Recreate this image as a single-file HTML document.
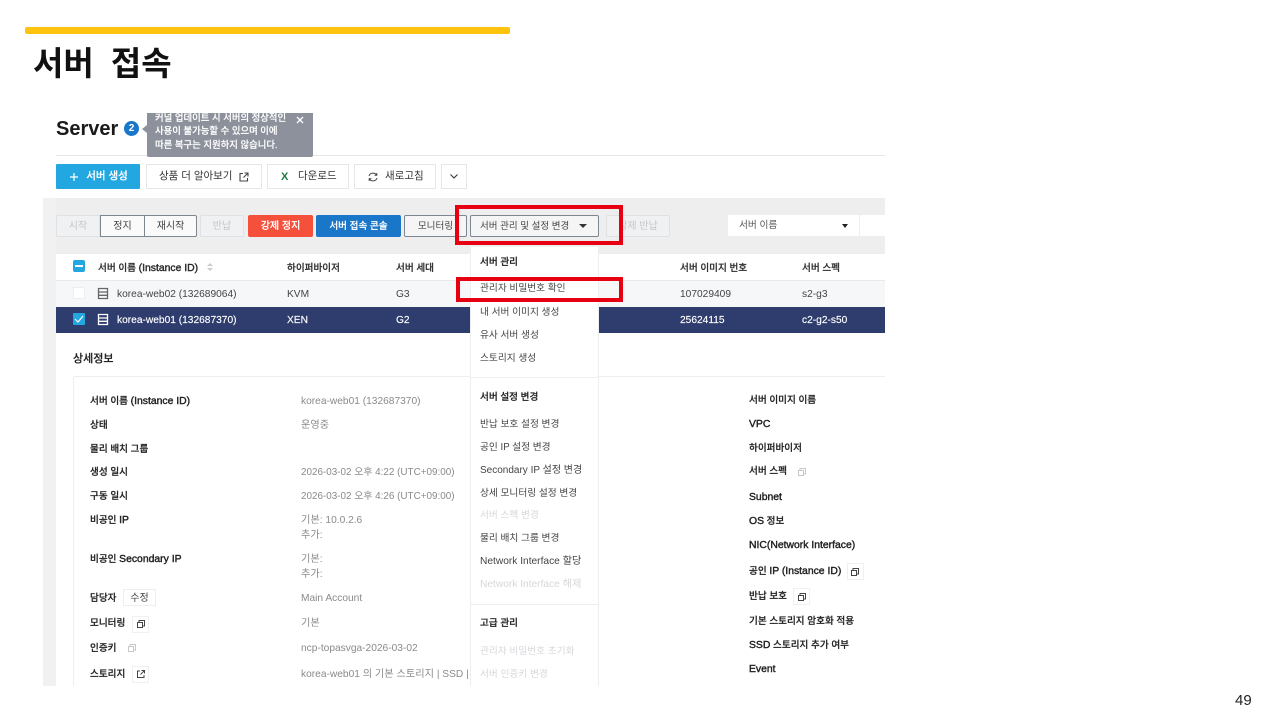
<!DOCTYPE html>
<html lang="ko"><head><meta charset="utf-8"><title>서버 접속</title>
<style>
html,body{margin:0;padding:0;background:#fff}
#p{position:relative;width:1280px;height:720px;overflow:hidden;background:#fff;font-family:"Liberation Sans","Noto Sans CJK KR",sans-serif}
#c{position:absolute;left:43px;top:113px;width:842px;height:573px;overflow:hidden;background:#fff;filter:blur(.35px)}
.a{position:absolute}
.t{position:absolute;white-space:nowrap;font-size:10.2px;line-height:14px;color:#444}
#c .t{margin-top:2px}
#c .t.n{margin-top:0}
.b{font-weight:500;color:#222;-webkit-text-stroke:.2px #222;font-size:9.6px}
.b i{font-style:normal;font-size:10.4px;-webkit-text-stroke:.4px #222}
.k{font-size:9.7px}
.g{color:#8a8a8a}
.d{color:#d5d7da}
.btn{position:absolute;box-sizing:border-box;text-align:center;font-size:10px;white-space:nowrap}
.m{font-weight:500;-webkit-text-stroke:.15px currentColor}
.r{position:absolute;box-sizing:border-box;border:4.5px solid #e60012}
svg{position:absolute;overflow:visible}
</style></head><body><div id="p">
<div class="a" style="left:25px;top:27px;width:485px;height:6.5px;background:#fdc30f;border-radius:2px"></div>
<div class="t" style="left:33px;top:44px;font-size:33px;line-height:40px;font-weight:700;color:#111;word-spacing:8px;filter:blur(.3px)">서버 접속</div>
<div class="t" style="left:1235px;top:694px;font-size:15px;color:#222">49</div>

<div id="c">
<!-- header white -->
<div class="t n" style="left:13px;top:3px;font-size:20px;line-height:26px;font-weight:700;color:#1a1a1a">Server</div>
<div class="a" style="left:81px;top:8px;width:15px;height:15px;border-radius:50%;background:#1a76c9;color:#fff;font-size:10px;line-height:15px;text-align:center;font-weight:700">2</div>
<div class="a" style="left:99px;top:12px;width:0;height:0;border:4px solid transparent;border-right:5px solid #8c919c;border-left:0"></div>
<div class="a" style="left:104px;top:0;width:166px;height:44px;background:#8c919c;border-radius:0 0 2px 2px"></div>
<div class="t m n" style="left:112px;top:-2px;color:#fff;font-size:9.4px">커널 업데이트 시 서버의 정상적인</div>
<div class="t m n" style="left:112px;top:11px;color:#fff;font-size:9.4px">사용이 불가능할 수 있으며 이에</div>
<div class="t m n" style="left:112px;top:25px;color:#fff;font-size:9.4px">따른 복구는 지원하지 않습니다.</div>
<svg style="left:253px;top:3px" width="8" height="8"><path d="M1 1L7 7M7 1L1 7" stroke="#fff" stroke-width="1.3"/></svg>
<div class="a" style="left:270px;top:42px;width:572px;height:1px;background:#e6e6e6"></div>
<div class="a" style="left:13px;top:42px;width:91px;height:1px;background:#e6e6e6"></div>

<div class="btn m" style="left:13px;top:51px;width:84px;height:25px;background:#22a7e0;color:#fff;line-height:25px;border-radius:1px;padding-left:18px;font-size:10.5px">서버 생성</div>
<svg style="left:26px;top:59px" width="10" height="10"><path d="M5 1V9M1 5H9" stroke="#fff" stroke-width="1.2"/></svg>
<div class="btn" style="left:103px;top:51px;width:116px;height:25px;background:#fff;border:1px solid #e4e6e8;color:#333;line-height:23px;font-size:10.5px;text-align:left;padding-left:12px">상품 더 알아보기</div>
<svg style="left:196px;top:59px" width="10" height="10" fill="none" stroke="#444" stroke-width="1.1"><path d="M4 1.5H1V9H8.5V6M5.5 1H9V4.5M9 1L4.5 5.5"/></svg>
<div class="btn" style="left:224px;top:51px;width:82px;height:25px;background:#fff;border:1px solid #e4e6e8;color:#333;line-height:23px;font-size:10.5px;padding-left:30px;text-align:left">다운로드</div>
<div class="t n" style="left:238px;top:57px;font-size:11px;font-weight:700;color:#1d7a45">X</div>
<div class="btn" style="left:311px;top:51px;width:82px;height:25px;background:#fff;border:1px solid #e4e6e8;color:#333;line-height:23px;font-size:10.5px;padding-left:30px;text-align:left">새로고침</div>
<svg style="left:325px;top:59px" width="10" height="10" fill="none" stroke="#444" stroke-width="1"><path d="M1 4A4.2 4.2 0 0 1 8.5 3M9 6A4.2 4.2 0 0 1 1.5 7M8.8 1V3.2H6.6M1.2 9V6.8H3.4"/></svg>
<div class="btn" style="left:398px;top:51px;width:26px;height:25px;background:#fff;border:1px solid #e4e6e8"></div>
<svg style="left:407px;top:61px" width="8" height="5" fill="none" stroke="#333" stroke-width="1.1"><path d="M.5.5L4 4L7.5.5"/></svg>

<!-- gray band -->
<div class="a" style="left:0;top:85px;width:842px;height:56px;background:#eeeeee"></div>
<div class="a" style="left:0;top:85px;width:13px;height:488px;background:#f1f1f1"></div>

<div class="btn" style="left:13px;top:102px;width:44px;height:22px;background:#f0f1f2;border:1px solid #dfe1e3;color:#c4c6c9;line-height:21px;border-radius:2px 0 0 2px">시작</div>
<div class="btn" style="left:57px;top:102px;width:45px;height:22px;background:#fafafa;border:1px solid #7d8791;color:#444;line-height:21px">정지</div>
<div class="btn" style="left:101px;top:102px;width:53px;height:22px;background:#fafafa;border:1px solid #7d8791;color:#444;line-height:21px;border-radius:0 2px 2px 0">재시작</div>
<div class="btn" style="left:157px;top:102px;width:44px;height:22px;background:#f0f1f2;border:1px solid #dfe1e3;color:#c4c6c9;line-height:21px;border-radius:2px">반납</div>
<div class="btn m" style="left:205px;top:102px;width:65px;height:22px;background:#f4503c;color:#fff;line-height:23px;border-radius:2px">강제 정지</div>
<div class="btn m" style="left:273px;top:102px;width:85px;height:22px;background:#1a76c9;color:#fff;line-height:23px;border-radius:2px;font-size:9.6px">서버 접속 콘솔</div>
<div class="btn" style="left:361px;top:102px;width:63px;height:22px;background:#f5f5f5;border:1px solid #7d8791;color:#444;line-height:21px;border-radius:2px;font-size:9.6px">모니터링</div>
<div class="btn" style="left:427px;top:102px;width:129px;height:22px;background:#f5f5f5;border:1px solid #7d8791;color:#444;line-height:21px;border-radius:2px;text-align:left;padding-left:9px;font-size:9.5px">서버 관리 및 설정 변경</div>
<div class="a" style="left:536px;top:111px;width:0;height:0;border:4px solid transparent;border-top:4px solid #333;border-bottom:0"></div>
<div class="btn" style="left:563px;top:102px;width:64px;height:22px;background:#f0f1f2;border:1px solid #dfe1e3;color:#c4c6c9;line-height:21px;border-radius:2px">강제 반납</div>
<div class="a" style="left:685px;top:102px;width:131px;height:21px;background:#fff"></div>
<div class="t n" style="left:696px;top:106px;color:#555;font-size:9.7px">서버 이름</div>
<div class="a" style="left:799px;top:111px;width:0;height:0;border:3.5px solid transparent;border-top:4px solid #222;border-bottom:0"></div>
<div class="a" style="left:817px;top:102px;width:25px;height:21px;background:#fff"></div>

<!-- table -->
<div class="a" style="left:13px;top:141px;width:829px;height:26px;background:#fff"></div>
<div class="a" style="left:13px;top:167px;width:829px;height:27px;background:#f6f7f8;border-top:1px solid #e8eaec;box-sizing:border-box"></div>
<div class="a" style="left:13px;top:194px;width:829px;height:26px;background:#2f3d6e"></div>
<div class="a" style="left:30px;top:147px;width:12px;height:12px;background:#22a7e0;border-radius:2px"></div>
<div class="a" style="left:32px;top:152px;width:8px;height:2px;background:#fff"></div>
<div class="a" style="left:30px;top:174px;width:12px;height:12px;background:#fff;border:1px solid #eceef0;box-sizing:border-box"></div>
<div class="a" style="left:30px;top:200px;width:12px;height:12px;background:#22a7e0;border-radius:1px"></div>
<svg style="left:30px;top:200px" width="12" height="12" fill="none" stroke="#fff" stroke-width="1.1"><path d="M2 6L5 9L10 3"/></svg>
<svg style="left:55px;top:175px" width="10" height="11" fill="none" stroke="#666" stroke-width="1.3"><path d="M.5.5H9.5V10.5H.5ZM.5 4H9.5M.5 7.3H9.5"/></svg>
<svg style="left:55px;top:201px" width="10" height="11" fill="none" stroke="#fff" stroke-width="1.3"><path d="M.5.5H9.5V10.5H.5ZM.5 4H9.5M.5 7.3H9.5"/></svg>
<div class="t b n" style="left:55px;top:149px;color:#333">서버 이름 <i>(Instance ID)</i></div>
<div class="a" style="left:164px;top:150px;width:0;height:0;border:3.5px solid transparent;border-bottom:3.5px solid #ccc;border-top:0"></div>
<div class="a" style="left:164px;top:155px;width:0;height:0;border:3.5px solid transparent;border-top:3.5px solid #ccc;border-bottom:0"></div>
<div class="t b n" style="left:244px;top:149px;color:#333">하이퍼바이저</div>
<div class="t b n" style="left:353px;top:149px;color:#333">서버 세대</div>
<div class="t b n" style="left:637px;top:149px;color:#333">서버 이미지 번호</div>
<div class="t b n" style="left:759px;top:149px;color:#333">서버 스펙</div>
<div class="t" style="left:74px;top:173px">korea-web02 (132689064)</div>
<div class="t" style="left:244px;top:173px">KVM</div>
<div class="t" style="left:353px;top:173px">G3</div>
<div class="t" style="left:637px;top:173px">107029409</div>
<div class="t" style="left:759px;top:173px">s2-g3</div>
<div class="t m" style="left:74px;top:199px;color:#fff">korea-web01 (132687370)</div>
<div class="t m" style="left:244px;top:199px;color:#fff">XEN</div>
<div class="t m" style="left:353px;top:199px;color:#fff">G2</div>
<div class="t m" style="left:637px;top:199px;color:#fff">25624115</div>
<div class="t m" style="left:759px;top:199px;color:#fff">c2-g2-s50</div>

<!-- details -->
<div class="t b n" style="left:30px;top:239px;font-size:11px">상세정보</div>
<div class="a" style="left:30px;top:263px;width:830px;height:340px;border:1px solid #eceef0;box-sizing:border-box;border-radius:2px"></div>
<div class="t b" style="left:47px;top:280px">서버 이름 <i>(Instance ID)</i></div><div class="t g" style="left:258px;top:280px">korea-web01 (132687370)</div>
<div class="t b" style="left:47px;top:304px">상태</div><div class="t g" style="left:258px;top:304px">운영중</div>
<div class="t b" style="left:47px;top:328px">물리 배치 그룹</div>
<div class="t b" style="left:47px;top:351px">생성 일시</div><div class="t g" style="left:258px;top:351px;font-size:9.9px">2026-03-02 오후 4:22 (UTC+09:00)</div>
<div class="t b" style="left:47px;top:375px">구동 일시</div><div class="t g" style="left:258px;top:375px;font-size:9.9px">2026-03-02 오후 4:26 (UTC+09:00)</div>
<div class="t b" style="left:47px;top:399px">비공인 <i>IP</i></div><div class="t g" style="left:258px;top:399px">기본: 10.0.2.6</div><div class="t g" style="left:258px;top:414px">추가:</div>
<div class="t b" style="left:47px;top:438px">비공인 <i>Secondary IP</i></div><div class="t g" style="left:258px;top:438px">기본:</div><div class="t g" style="left:258px;top:453px">추가:</div>
<div class="t b" style="left:47px;top:477px">담당자</div>
<div class="btn" style="left:80px;top:476px;width:33px;height:17px;border:1px solid #eceef0;line-height:17px;color:#444">수정</div>
<div class="t g" style="left:258px;top:477px">Main Account</div>
<div class="t b" style="left:47px;top:502px">모니터링</div><div class="t g" style="left:258px;top:502px">기본</div>
<div class="a" style="left:89px;top:503px;width:17px;height:17px;border:1px solid #eef0f2;box-sizing:border-box"></div>
<svg style="left:94px;top:507px" width="8" height="8" fill="none" stroke="#444"><path d="M.5 2.5H5.5V7.5H.5ZM2 2.5V.5H7.5V6H5.5"/></svg>
<div class="t b" style="left:47px;top:527px">인증키</div><div class="t g" style="left:258px;top:527px">ncp-topasvga-2026-03-02</div>
<svg style="left:85px;top:531px" width="8" height="8" fill="none" stroke="#c5c7ca"><path d="M.5 2.5H5.5V7.5H.5ZM2 2.5V.5H7.5V6H5.5"/></svg>
<div class="t b" style="left:47px;top:553px">스토리지</div><div class="t g" style="left:258px;top:553px">korea-web01 의 기본 스토리지 | SSD | 50</div>
<div class="a" style="left:89px;top:553px;width:17px;height:17px;border:1px solid #eef0f2;box-sizing:border-box"></div>
<svg style="left:94px;top:557px" width="8" height="8" fill="none" stroke="#444"><path d="M3 1H.5V7.5H7V5M4.5.5H7.5V3.5M7.5.5L3.5 4.5"/></svg>

<div class="t b" style="left:706px;top:279px">서버 이미지 이름</div>
<div class="t b" style="left:706px;top:303px"><i>VPC</i></div>
<div class="t b" style="left:706px;top:327px">하이퍼바이저</div>
<div class="t b" style="left:706px;top:350px">서버 스펙</div>
<svg style="left:755px;top:355px" width="8" height="8" fill="none" stroke="#c5c7ca"><path d="M.5 2.5H5.5V7.5H.5ZM2 2.5V.5H7.5V6H5.5"/></svg>
<div class="t b" style="left:706px;top:376px"><i>Subnet</i></div>
<div class="t b" style="left:706px;top:400px"><i>OS</i> 정보</div>
<div class="t b" style="left:706px;top:424px"><i>NIC(Network Interface)</i></div>
<div class="t b" style="left:706px;top:450px">공인 <i>IP (Instance ID)</i></div>
<div class="a" style="left:804px;top:450px;width:17px;height:17px;border:1px solid #eef0f2;box-sizing:border-box"></div>
<svg style="left:808px;top:455px" width="8" height="8" fill="none" stroke="#444"><path d="M.5 2.5H5.5V7.5H.5ZM2 2.5V.5H7.5V6H5.5"/></svg>
<div class="t b" style="left:706px;top:475px">반납 보호</div>
<div class="a" style="left:750px;top:475px;width:17px;height:17px;border:1px solid #eef0f2;box-sizing:border-box"></div>
<svg style="left:755px;top:480px" width="8" height="8" fill="none" stroke="#444"><path d="M.5 2.5H5.5V7.5H.5ZM2 2.5V.5H7.5V6H5.5"/></svg>
<div class="t b" style="left:706px;top:500px">기본 스토리지 암호화 적용</div>
<div class="t b" style="left:706px;top:524px"><i>SSD</i> 스토리지 추가 여부</div>
<div class="t b" style="left:706px;top:548px"><i>Event</i></div>

<!-- dropdown -->
<div class="a" style="left:427px;top:134px;width:129px;height:460px;background:#fff;border:1px solid #eceef0;border-top:0;box-sizing:border-box"></div>
<div class="a" style="left:427px;top:264px;width:129px;height:1px;background:#eceef0"></div>
<div class="a" style="left:427px;top:491px;width:129px;height:1px;background:#eceef0"></div>
<div class="t b" style="left:437px;top:141px">서버 관리</div>
<div class="t k" style="left:437px;top:167px">관리자 비밀번호 확인</div>
<div class="t k" style="left:437px;top:191px">내 서버 이미지 생성</div>
<div class="t k" style="left:437px;top:214px">유사 서버 생성</div>
<div class="t k" style="left:437px;top:237px">스토리지 생성</div>
<div class="t b" style="left:437px;top:276px">서버 설정 변경</div>
<div class="t k" style="left:437px;top:303px">반납 보호 설정 변경</div>
<div class="t k" style="left:437px;top:326px">공인 IP 설정 변경</div>
<div class="t" style="left:437px;top:349px;font-size:10px">Secondary IP 설정 변경</div>
<div class="t k" style="left:437px;top:372px">상세 모니터링 설정 변경</div>
<div class="t d k" style="left:437px;top:394px">서버 스펙 변경</div>
<div class="t k" style="left:437px;top:417px">물리 배치 그룹 변경</div>
<div class="t" style="left:437px;top:440px">Network Interface 할당</div>
<div class="t d" style="left:437px;top:463px">Network Interface 해제</div>
<div class="t b" style="left:437px;top:502px">고급 관리</div>
<div class="t d k" style="left:437px;top:530px">관리자 비밀번호 초기화</div>
<div class="t d k" style="left:437px;top:553px">서버 인증키 변경</div>
</div>

<div class="r" style="left:455px;top:205px;width:168px;height:40px"></div>
<div class="r" style="left:456px;top:277px;width:167px;height:25px"></div>
</div></body></html>
